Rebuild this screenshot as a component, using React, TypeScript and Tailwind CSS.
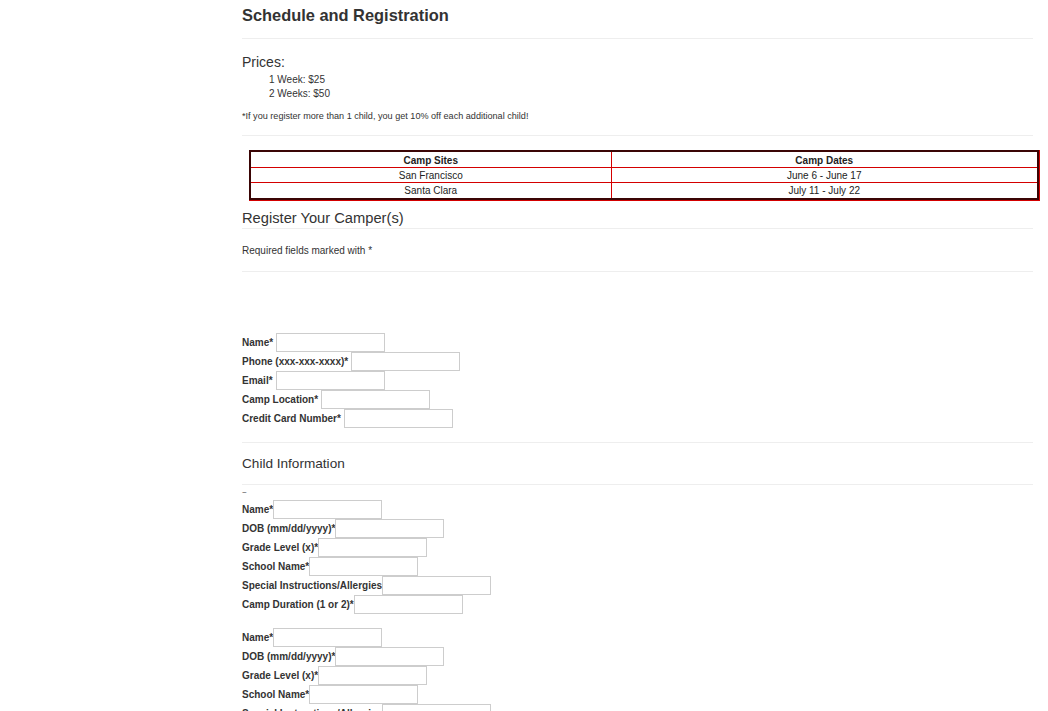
import React from 'react';

const camperFields = [
  'Name*',
  'Phone (xxx-xxx-xxxx)*',
  'Email*',
  'Camp Location*',
  'Credit Card Number*',
];

const childFields = [
  'Name*',
  'DOB (mm/dd/yyyy)*',
  'Grade Level (x)*',
  'School Name*',
  'Special Instructions/Allergies',
  'Camp Duration (1 or 2)*',
];

function Field({ label, tight = false }: { label: string; tight?: boolean }) {
  return (
    <div className="flex items-center h-[19px]">
      <label className="font-bold text-[10px] leading-[14px] pt-[2px] whitespace-nowrap">{label}</label>
      <input
        type="text"
        className={`${tight ? 'ml-[0px]' : 'ml-[3px]'} w-[109px] h-[19px] border border-[#cdcdcd] bg-white outline-none`}
      />
    </div>
  );
}

function Rule({ className = '' }: { className?: string }) {
  return <div className={`h-px bg-[#eeeeee] ${className}`} />;
}

export default function App() {
  return (
    <div
      className="min-h-screen bg-white text-[#333333] overflow-hidden"
      style={{ fontFamily: '"Liberation Sans", Arial, sans-serif' }}
    >
      <div className="ml-[242px] w-[791px]">
        <h1 className="mt-[5px] h-[20px] leading-[20px] text-[16.4px] font-bold">Schedule and Registration</h1>
        <Rule className="mt-[13px]" />

        <h3 className="mt-[15px] text-[14px] leading-[16px]">Prices:</h3>
        <div className="mt-[3px] pl-[27px] text-[10px] leading-[14px]">
          <div>1 Week: $25</div>
          <div>2 Weeks: $50</div>
        </div>
        <p className="mt-[9px] text-[9.1px] leading-[12px]">
          *If you register more than 1 child, you get 10% off each additional child!
        </p>
        <Rule className="mt-[13px]" />

        <div className="mt-[14px] ml-[7px] w-[791px] border-r border-b border-[#d40000]">
          <div className="border-2 border-[#3a0505]">
            <table className="w-full table-fixed border-collapse text-[10px] text-center text-[#222]">
              <colgroup>
                <col className="w-[360px]" />
                <col />
              </colgroup>
              <thead>
                <tr>
                  <th className="border border-t-0 border-l-0 border-[#d40000] font-bold h-[15px] leading-[13px] pt-[2px] pb-0 px-0">Camp Sites</th>
                  <th className="border border-t-0 border-r-0 border-[#d40000] font-bold h-[15px] leading-[13px] pt-[2px] pb-0 px-0">Camp Dates</th>
                </tr>
              </thead>
              <tbody>
                <tr>
                  <td className="border border-l-0 border-[#d40000] h-[15px] leading-[13px] pt-[1px] pb-0 px-0">San Francisco</td>
                  <td className="border border-r-0 border-[#d40000] h-[15px] leading-[13px] pt-[1px] pb-0 px-0">June 6 - June 17</td>
                </tr>
                <tr>
                  <td className="border border-l-0 border-b-0 border-[#d40000] h-[15px] leading-[13px] pt-[1px] pb-0 px-0">Santa Clara</td>
                  <td className="border border-r-0 border-b-0 border-[#d40000] h-[15px] leading-[13px] pt-[1px] pb-0 px-0">July 11 - July 22</td>
                </tr>
              </tbody>
            </table>
          </div>
        </div>

        <h3 className="mt-[9px] text-[14.7px] leading-[16px]">Register Your Camper(s)</h3>
        <Rule className="mt-[2px]" />
        <p className="mt-[15px] text-[10px] leading-[14px]">Required fields marked with *</p>
        <Rule className="mt-[13px]" />

        <form className="mt-[61px]">
          {camperFields.map((l) => (
            <Field key={l} label={l} />
          ))}
        </form>

        <Rule className="mt-[14px]" />
        <h4 className="mt-[13px] text-[13.6px] leading-[16px]">Child Information</h4>
        <Rule className="mt-[12px]" />
        <div className="h-[15px] text-[8px] leading-[15px]">~</div>

        <div>
          {childFields.map((l) => (
            <Field key={'a' + l} label={l} tight />
          ))}
        </div>
        <div className="mt-[14px]">
          {childFields.map((l) => (
            <Field key={'b' + l} label={l} tight />
          ))}
        </div>
      </div>
    </div>
  );
}
